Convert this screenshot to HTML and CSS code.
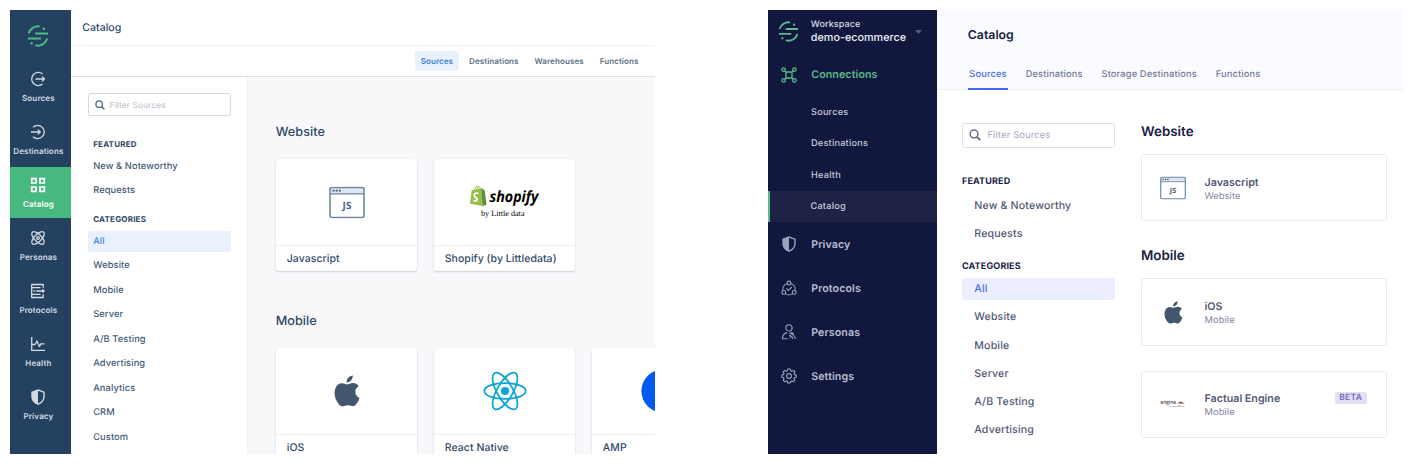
FILE: index.html
```html
<!DOCTYPE html>
<html lang="en">
<head>
<meta charset="utf-8">
<title>Catalog</title>
<link rel="stylesheet" href="styles.css">
</head>
<body>
<svg class="defs" width="0" height="0">
  <symbol id="logo" viewBox="-11 -11 22 22">
    <g fill="none" stroke="currentColor" stroke-width="2">
      <path d="M-9.3 -2.6A9.7 9.7 0 0 1 1.6 -9.5M9.3 2.6A9.7 9.7 0 0 1 -2.6 9.3M-2.9 -2.6H10M-10 2.5H2.9"/>
    </g>
    <circle cx="5.8" cy="-7.2" r="1.2" fill="currentColor"/><circle cx="-6.4" cy="7.2" r="1.2" fill="currentColor"/>
  </symbol>
  <symbol id="shield" viewBox="0 0 16 16">
    <path d="M8 1L14 3.2V7.4C14 11 11.6 13.7 8 15.2C4.4 13.7 2 11 2 7.4V3.2Z" fill="none" stroke="currentColor" stroke-width="1.4"/>
    <path d="M8 1L2 3.2V7.4C2 11 4.4 13.7 8 15.2Z" fill="currentColor"/>
  </symbol>
  <symbol id="search" viewBox="0 0 12 12">
    <circle cx="5" cy="5" r="3.9" fill="none" stroke="currentColor" stroke-width="1.5"/><path d="M8 8L11.2 11.2" stroke="currentColor" stroke-width="1.8"/>
  </symbol>
  <symbol id="apple" viewBox="0 0 26 32">
    <path d="M18.8 0.5C18.9 4.2 15.9 7.5 12.6 7.4C12.4 3.9 15.5 0.7 18.8 0.5ZM24.7 11.2C22.4 12.6 21.3 14.5 21.4 17C21.5 19.8 22.9 21.8 25.5 23C24.7 25.6 23.3 28 21.4 30C20.1 31.4 18.4 31.5 16.8 30.8C14.6 29.9 12.5 29.9 10.3 30.9C8.4 31.7 6.9 31.5 5.4 30C0.9 25.1 -0.6 18.7 1.3 13.4C2.5 10 5.3 8.2 8 8.2C10 8.2 11.5 9.4 13.2 9.4C15 9.4 16.4 8.1 19 8.1C21.2 8.1 23.3 9.2 24.7 11.2Z" fill="#42566e"/>
  </symbol>
  <symbol id="window" viewBox="0 0 36 32">
    <path d="M1 3Q1 1 3 1H33Q35 1 35 3V7.5H1Z" fill="#dfe6ef"/>
    <rect x="1" y="1" width="34" height="30" rx="2" fill="none" stroke="#6b87a3" stroke-width="1.6"/>
    <path d="M1 7.3H35" stroke="#6b87a3" stroke-width="1.2"/>
    <path d="M3.5 4.2H5.5M6.7 4.2H8.7M9.9 4.2H11.9" stroke="#3f5c7a" stroke-width="1.7"/>
  </symbol>
</svg>

<main class="stage">
  <section class="app old">
    <nav class="rail">
      <div class="rail-logo"><svg width="22" height="22"><use href="#logo"/></svg></div>
      <a class="rail-item"><svg width="16" height="16" viewBox="0 0 16 16" class="line"><path d="M12.6 3A6.6 6.6 0 1 0 12.6 13M5.5 8H14.5M12 5.6L14.5 8L12 10.4"/></svg><span>Sources</span></a>
      <a class="rail-item"><svg width="16" height="16" viewBox="0 0 16 16" class="line"><path d="M3 3.3A6.6 6.6 0 1 1 3 12.7M1 8H10.3M7.8 5.6L10.3 8L7.8 10.4"/></svg><span>Destinations</span></a>
      <a class="rail-item active"><svg width="16" height="16" viewBox="0 0 16 16" class="line bold"><path d="M1.7 1.7H6V6H1.7ZM10 1.7H14.3V6H10ZM1.7 10H6V14.3H1.7ZM10 10H14.3V14.3H10Z"/></svg><span>Catalog</span></a>
      <a class="rail-item"><svg width="16" height="16" viewBox="0 0 16 16" class="line"><ellipse cx="8" cy="8" rx="8.1" ry="3.6" transform="rotate(45 8 8)"/><ellipse cx="8" cy="8" rx="8.1" ry="3.6" transform="rotate(-45 8 8)"/><circle cx="8" cy="8" r="1.3"/></svg><span>Personas</span></a>
      <a class="rail-item"><svg width="16" height="16" viewBox="0 0 16 16" class="line"><path d="M13.2 4.7V1.5H1.7V14.5H13.2V11.3M1.7 4.6H10.5M3.5 8H5.2M6.4 8H14M1.7 11.3H10.5M12.4 6.4L14.2 8L12.4 9.6"/></svg><span>Protocols</span></a>
      <a class="rail-item"><svg width="16" height="16" viewBox="0 0 16 16" class="line"><path d="M1.7 1V14.4H15M1.7 8.5H5L7 5L9.4 10.6L10.8 7.8H14.5"/></svg><span>Health</span></a>
      <a class="rail-item"><svg width="16" height="16"><use href="#shield"/></svg><span>Privacy</span></a>
    </nav>
    <div class="old-main">
      <header class="old-title">Catalog</header>
      <div class="old-tabs"><a class="active">Sources</a><a>Destinations</a><a>Warehouses</a><a>Functions</a></div>
      <div class="old-body">
        <aside class="filters">
          <div class="search"><svg width="10" height="10"><use href="#search"/></svg><span>Filter Sources</span></div>
          <h4>FEATURED</h4>
          <ul><li>New &amp; Noteworthy</li><li>Requests</li></ul>
          <h4 class="second">CATEGORIES</h4>
          <ul><li class="active">All</li><li>Website</li><li>Mobile</li><li>Server</li><li>A/B Testing</li><li>Advertising</li><li>Analytics</li><li>CRM</li><li>Custom</li></ul>
        </aside>
        <div class="old-catalog">
          <h2>Website</h2>
          <div class="cards">
            <article class="card"><div class="art"><svg width="36" height="33" viewBox="0 0 36 32"><use href="#window" width="36" height="32"/><text x="18" y="22.4" text-anchor="middle" class="js-text">JS</text></svg></div><p>Javascript</p></article>
            <article class="card"><div class="art">
              <svg width="72" height="36" viewBox="0 0 72 36">
                <path d="M2.6 6.5L12.5 4L13.5 22L1 19.8Z" fill="#95bf47"/><path d="M12.5 4L15.6 6.2L17.6 20.8L13.5 22Z" fill="#5e8e3e"/>
                <path d="M5 6.5Q6.3 1.8 9 2Q11.2 2.4 11.3 5.5M7.8 6Q8 3 10 2.3" fill="none" stroke="#95bf47" stroke-width="1"/>
                <path d="M9.6 9.5Q5.2 8.3 5.2 11.5Q5.4 12.8 7.3 14Q9.2 15.8 7 17Q5.7 17.4 4.4 16.3" fill="none" stroke="#fff" stroke-width="1.8"/>
                <text x="20.5" y="18" textLength="49" lengthAdjust="spacingAndGlyphs" class="shopify">shopify</text>
                <text x="12" y="31.6" textLength="43.5" lengthAdjust="spacingAndGlyphs" class="byline">by Little data</text>
              </svg></div><p>Shopify (by Littledata)</p></article>
          </div>
          <h2 class="second">Mobile</h2>
          <div class="cards">
            <article class="card"><div class="art"><svg width="26" height="32"><use href="#apple"/></svg></div><p>iOS</p></article>
            <article class="card"><div class="art"><svg width="44" height="40" viewBox="-22 -20 44 40"><g fill="none" stroke="#09a5d6" stroke-width="1.7"><ellipse rx="20.7" ry="7.9"/><ellipse rx="20.7" ry="7.9" transform="rotate(60)"/><ellipse rx="20.7" ry="7.9" transform="rotate(120)"/></g><circle r="4" fill="#09a5d6"/></svg></div><p>React Native</p></article>
            <article class="card"><div class="art"><svg width="44" height="44" viewBox="-22 -22 44 44"><circle r="21.6" fill="#005af0"/><path d="M3 -12L-7.6 3.2H-2L-4 12L7.6 -3H1Z" fill="#fff"/></svg></div><p>AMP</p></article>
          </div>
        </div>
      </div>
    </div>
  </section>

  <section class="app new">
    <nav class="menu">
      <div class="workspace"><svg width="21" height="21"><use href="#logo"/></svg><div><small>Workspace</small><strong>demo-ecommerce</strong></div><svg class="caret" width="7" height="4" viewBox="0 0 7 4"><path d="M0 0H7L3.5 4Z"/></svg></div>
      <a class="top green"><svg width="16" height="16" viewBox="0 0 16 16" class="line"><rect x="5" y="5" width="6" height="6" rx="1"/><circle cx="2.6" cy="2.6" r="1.7"/><circle cx="13.4" cy="2.6" r="1.7"/><circle cx="2.6" cy="13.4" r="1.7"/><circle cx="13.4" cy="13.4" r="1.7"/><path d="M3.8 3.8L5.4 5.4M12.2 3.8L10.6 5.4M3.8 12.2L5.4 10.6M12.2 12.2L10.6 10.6"/></svg>Connections</a>
      <div class="sub"><a>Sources</a><a>Destinations</a><a>Health</a><a class="active">Catalog</a></div>
      <a class="top"><svg width="16" height="16"><use href="#shield"/></svg>Privacy</a>
      <a class="top"><svg width="16" height="16" viewBox="0 0 16 16" class="line thin"><circle cx="8" cy="3" r="1.9"/><circle cx="2.8" cy="12.4" r="1.9"/><circle cx="13.2" cy="12.4" r="1.9"/><path d="M6.1 3.5A6.4 6.4 0 0 0 1.9 10.6M9.9 3.5A6.4 6.4 0 0 1 14.1 10.6M4.6 13.9A6.5 6.5 0 0 0 11.4 13.9M5.3 8.4L7.4 10.4L10.8 7"/></svg>Protocols</a>
      <a class="top"><svg width="16" height="16" viewBox="0 0 16 16" class="line thin"><circle cx="8" cy="3.9" r="3.1"/><path d="M6.6 14.8H1.4C1.4 11.6 3.2 9.2 6.2 8.9M8.2 9.3C11.6 9.5 13.6 11.8 14.4 14.8M8 11.6C10 11.6 11.4 12.9 11.8 14.8M8.3 14H9.4M9.8 8.6C11 8.8 12 9.3 12.8 10.2"/></svg>Personas</a>
      <a class="top"><svg width="16" height="16" viewBox="0 0 16 16" class="line thin"><path d="M6.7 1H9.3L9.7 2.8L11.1 3.4L12.7 2.4L14 4.1L13 5.5L13.5 6.6L15.2 7V9.2L13.5 9.6L13 10.7L13.8 12.2L12.3 13.8L10.8 12.9L9.6 13.4L9.2 15H6.8L6.4 13.4L5.2 12.9L3.7 13.8L2.2 12.2L3 10.7L2.5 9.6L.8 9.2V7L2.5 6.6L3 5.5L2 4.1L3.5 2.4L4.9 3.4L6.3 2.8Z"/><circle cx="8" cy="8" r="2.4"/></svg>Settings</a>
    </nav>
    <div class="new-main">
      <header class="new-head"><h1>Catalog</h1><div class="new-tabs"><a class="active">Sources</a><a>Destinations</a><a>Storage Destinations</a><a>Functions</a></div></header>
      <div class="new-body">
        <aside class="filters">
          <div class="search"><svg width="12" height="12"><use href="#search"/></svg><span>Filter Sources</span></div>
          <h4>FEATURED</h4>
          <ul><li>New &amp; Noteworthy</li><li>Requests</li></ul>
          <h4 class="second">CATEGORIES</h4>
          <ul><li class="active">All</li><li>Website</li><li>Mobile</li><li>Server</li><li>A/B Testing</li><li>Advertising</li></ul>
        </aside>
        <div class="new-catalog">
          <h2>Website</h2>
          <article class="row"><div class="icon"><svg width="26" height="24" viewBox="0 0 36 32"><use href="#window" width="36" height="32"/><text x="18" y="22.4" text-anchor="middle" class="js-text">JS</text></svg></div><div><h3>Javascript</h3><p>Website</p></div></article>
          <h2 class="second">Mobile</h2>
          <article class="row"><div class="icon"><svg width="19" height="23"><use href="#apple"/></svg></div><div><h3>iOS</h3><p>Mobile</p></div></article>
          <article class="row last"><div class="icon"><svg width="26" height="10" viewBox="0 0 26 10"><text x="0.5" y="5.2" textLength="15.5" lengthAdjust="spacingAndGlyphs" class="engine">engine</text><path d="M17.5 4.2L20.5 2.6L22.5 3.2L24.8 4.5H17.5Z" fill="#8a4a4a"/><path d="M9.5 7.5H25" stroke="#b9b4b4" stroke-width=".9" stroke-dasharray="2 .6"/><path d="M18 7H20" stroke="#e58a3c" stroke-width="1"/></svg></div><div><h3>Factual Engine</h3><p>Mobile</p></div><span class="beta">BETA</span></article>
        </div>
      </div>
    </div>
  </section>
</main>
</body>
</html>
```
FILE: styles.css
```css
* { box-sizing: border-box; }
body, h1, h2, h3, h4, p, ul { margin: 0; padding: 0; }
body { width: 1413px; height: 465px; overflow: hidden; background: #fff; font-family: Inter, sans-serif; text-rendering: geometricPrecision; white-space: nowrap; }
ul { list-style: none; }
svg { display: block; flex: none; overflow: visible; }
.defs { position: absolute; }
.line { fill: none; stroke: currentColor; stroke-width: 1.3; stroke-linejoin: round; }
.line.bold { stroke-width: 1.7; stroke-linejoin: miter; }
.line.thin { stroke-width: 1.1; }
.js-text { font: 700 10px "Open Sans", sans-serif; fill: #4a6480; }
.shopify { font: italic 700 15.5px "Open Sans", sans-serif; fill: #000; }
.byline { font: 8px "Liberation Serif", serif; fill: #000; }
.engine { font: 600 5.5px "Open Sans", sans-serif; fill: #4c3c3c; }

.stage { display: flex; justify-content: space-between; padding: 10.4px 9px 0 10px; }
.app { display: flex; height: 443.2px; overflow: hidden; }
.old { width: 645px; }
.new { width: 636px; }

/* Classic layout */
.rail { width: 61.2px; background: #24425f; color: #d3dae2; }
.rail-logo { height: 50.4px; padding: 1.6px 5px 0 0; display: flex; align-items: center; justify-content: center; color: #4ebb86; }
.rail-item { height: 50.6px; margin-bottom: 2.5px; display: flex; flex-direction: column; align-items: center; gap: 6px; padding: 10px 4.4px 0 0; font-size: 8px; font-weight: 600; line-height: 10px; letter-spacing: .15px; }
.rail-item.active { background: #48b881; color: #fff; }
.rail-item.active { margin-top: 0; }
.old-main { flex: 1; min-width: 0; display: flex; flex-direction: column; color: #3f5b78; }
.old-title { height: 35.6px; padding-left: 11px; border-bottom: 1px solid #f0f1f4; line-height: 35.6px; font-size: 10.6px; font-weight: 500; color: #2f4b69; }
.old-tabs { height: 31px; border-bottom: 1px solid #dde1e6; display: flex; align-items: center; justify-content: flex-end; padding-right: 11px; }
.old-tabs a { height: 19.4px; line-height: 20.6px; padding: 0 5.5px; margin-left: 4.9px; border-radius: 2.5px; font-size: 8px; font-weight: 600; letter-spacing: .1px; color: #5a7088; }
.old-tabs a.active { background: #e9f1fc; color: #3d86da; }
.old-body { flex: 1; display: flex; min-height: 0; }
.old .filters { flex: none; width: 177.3px; padding: 16.2px 16.3px 0 16.4px; border-right: 1px solid #f1f2f5; }
.search { display: flex; align-items: center; border: 1px solid #d3d8dd; border-radius: 2.5px; }
.old .search { height: 23px; padding-left: 6px; gap: 5px; color: #4e6780; font-size: 8.3px; }
.old .search span { color: #b5bdc7; padding-top: 2px; letter-spacing: .15px; }
.filters h4 { font-weight: 700; }
.old h4 { padding: 22px 0 0 5.6px; height: 39.4px; line-height: 12px; font-size: 8px; letter-spacing: .2px; color: #2b4865; }
.old h4.second { padding-top: 8.8px; height: 26.4px; }
.old li { height: 21.5px; line-height: 22.7px; margin-bottom: 3px; padding-left: 5.6px; border-radius: 2px; font-size: 9.3px; font-weight: 500; letter-spacing: .1px; }
.old li.active { background: #e9f1fc; color: #3d86da; }
.old-catalog { flex: 1; min-width: 0; overflow: hidden; background: #f8f8fb; padding: 46px 0 0 27.3px; }
.old-catalog h2 { height: 36px; line-height: 20px; font-size: 12.7px; font-weight: 500; color: #2b4865; }
.old-catalog h2.second { margin-top: 40.5px; }
.cards { display: flex; gap: 16.4px; }
.card { flex: none; width: 141.6px; height: 112.3px; background: #fff; border-radius: 3px; box-shadow: 0 1px 2px #c7ced8, 0 0 1px #dfe3ea; }
.art { height: 87.5px; border-bottom: 1px solid #eceef2; display: flex; align-items: center; justify-content: center; }
.card p { padding-left: 11px; line-height: 26.5px; font-size: 10.5px; font-weight: 500; letter-spacing: .05px; color: #2f4b69; }

/* Redesigned layout */
.menu { width: 168.8px; background: #12183d; color: #b9bdd0; }
.workspace { height: 42.6px; display: flex; align-items: flex-start; padding: 10.2px 0 0 10.3px; }
.workspace svg { color: #5cba8b; }
.workspace div { width: 104px; margin: -1.2px 0 0 11.5px; }
.workspace small, .workspace strong { display: block; line-height: 12.8px; font-weight: 500; }
.workspace small { font-size: 9px; color: #dcdee7; letter-spacing: .1px; }
.workspace strong { font-size: 10.8px; color: #eff0f5; }
.workspace .caret { fill: #555c78; margin-top: 9px; }
.top { height: 44px; display: flex; align-items: center; gap: 14.2px; padding-left: 13px; font-size: 10.7px; font-weight: 600; letter-spacing: .08px; }
.top svg { color: #9ba1bc; }
.green, .green svg { color: #5cba8b; }
.sub a { display: block; height: 31.35px; line-height: 32.4px; padding-left: 43px; font-size: 9.2px; font-weight: 500; letter-spacing: .2px; color: #c5c8d7; }
.sub a.active { background: #1e2346; border-left: 2.5px solid #5cba8b; padding-left: 40.5px; }
.new-main { flex: 1; }
.new-head { height: 80px; background: #fafbff; border-bottom: 1.5px solid #eff1f6; padding: 17px 0 0 31px; }
.new-head h1 { line-height: 16px; font-size: 12.3px; font-weight: 600; color: #191e43; }
.new-tabs { display: flex; gap: 16.9px; padding-left: .5px; margin-top: 24px; }
.new-tabs a { padding: 0 1px; height: 23px; line-height: 16px; font-size: 9.3px; font-weight: 500; letter-spacing: .14px; color: #747b9a; border-bottom: 2px solid transparent; }
.new-tabs a.active { color: #4c6fe8; border-color: #4269f0; }
.new-body { display: flex; padding: 32.3px 17.3px 0 25.2px; gap: 25.5px; color: #535975; }
.new .filters { width: 153.5px; flex: none; }
.new .search { height: 25px; padding-left: 6px; gap: 6.5px; border-color: #dfe1e9; font-size: 9.3px; color: #636983; }
.new .search span { color: #a3a7bd; padding-top: 1px; letter-spacing: .15px; }
.new h4 { height: 47px; padding-top: 28px; line-height: 12px; font-size: 9px; letter-spacing: .15px; color: #191e43; }
.new h4.second { height: 28px; padding-top: 10.5px; margin-top: -1px; }
.new li { height: 22px; line-height: 22.8px; margin-bottom: 6.25px; padding-left: 12.3px; border-radius: 3px; font-size: 10.6px; font-weight: 500; letter-spacing: .15px; }
.new li.active { background: #eaeefe; color: #4c6fe8; }
.new-catalog { flex: 1; }
.new-catalog h2 { height: 31.5px; line-height: 19.4px; font-size: 13.4px; font-weight: 600; color: #191e43; }
.new-catalog h2.second { margin-top: 25.5px; }
.row { display: flex; height: 67.3px; border: 1px solid #e9eaf1; border-radius: 3px; padding: 0 19px 0 18px; }
.row.last { margin-top: 25px; }
.icon { width: 27px; display: flex; justify-content: center; align-items: center; margin-right: 17.5px; }
.row h3 { margin-top: 19.4px; line-height: 15px; font-size: 10.7px; font-weight: 600; color: #535975; }
.row p { line-height: 13px; font-size: 9.3px; color: #7f85a0; letter-spacing: .1px; }
.beta { margin: 20.5px 0 0 auto; height: 12px; padding: 0 4.5px; line-height: 12.6px; border-radius: 2.5px; background: #e3dff6; color: #7a6cc0; font-size: 8.5px; font-weight: 600; letter-spacing: .3px; }
```
